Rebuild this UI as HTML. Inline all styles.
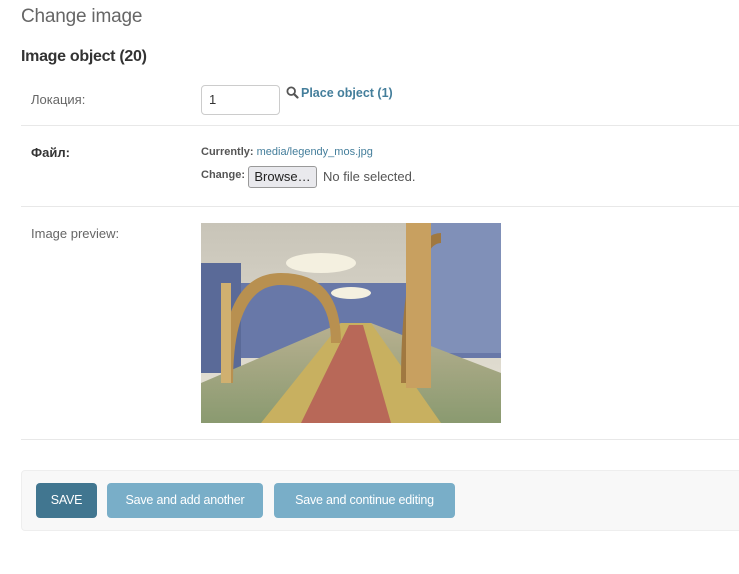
<!DOCTYPE html>
<html><head><style>
body{margin:0;background:#fff;font-family:"Liberation Sans",sans-serif;color:#333;width:739px;height:574px;overflow:hidden;position:relative}
.a{position:absolute;white-space:nowrap}
.sep{position:absolute;left:21px;right:0;height:1px;background:#e8e8e8}
.btn{position:absolute;top:483px;height:35px;border-radius:4px;color:#fff;font-size:12.5px;line-height:35px;text-align:center;letter-spacing:-0.2px}
</style></head><body>
<div class="a" style="left:21px;top:6px;font-size:19px;color:#666;letter-spacing:-0.2px">Change image</div>
<div class="a" style="left:21px;top:48px;font-size:16px;font-weight:bold;color:#333;letter-spacing:-0.3px">Image object (20)</div>
<div class="a" style="left:31px;top:92px;font-size:13px;color:#666">Локация:</div>
<div class="a" style="left:201px;top:85px;width:77px;height:28px;border:1px solid #ccc;border-radius:4px"></div>
<div class="a" style="left:209px;top:92px;font-size:13px;color:#333">1</div>
<svg class="a" style="left:286px;top:86px" width="13" height="13" viewBox="0 0 13 13"><circle cx="5.2" cy="5.2" r="3.8" fill="none" stroke="#555" stroke-width="1.8"/><line x1="8" y1="8" x2="11.5" y2="11.5" stroke="#555" stroke-width="2.2" stroke-linecap="round"/></svg>
<div class="a" style="left:301px;top:86px;font-size:12.5px;font-weight:bold;color:#447e9b">Place object (1)</div>
<div class="sep" style="top:125px"></div>
<div class="a" style="left:31px;top:145px;font-size:13px;font-weight:bold;color:#333">Файл:</div>
<div class="a" style="left:201px;top:146px;font-size:11px;color:#555"><b>Currently:</b> <span style="color:#447e9b">media/legendy_mos.jpg</span></div>
<div class="a" style="left:201px;top:169px;font-size:11px;color:#555;font-weight:bold">Change:</div>
<div class="a" style="left:248px;top:166px;width:67px;height:20px;border:1px solid #999;border-radius:3px;background:#e9e9ed;font-size:13px;line-height:20px;text-align:center;color:#222">Browse…</div>
<div class="a" style="left:323px;top:169px;font-size:13px;color:#555">No file selected.</div>
<div class="sep" style="top:206px"></div>
<div class="a" style="left:31px;top:226px;font-size:13px;color:#666">Image preview:</div>
<svg class="a" style="left:201px;top:223px" width="300" height="200" viewBox="0 0 300 200">
<defs><linearGradient id="f" x1="0" y1="0" x2="0" y2="1"><stop offset="0" stop-color="#b8b090"/><stop offset="1" stop-color="#8a9a70"/></linearGradient>
<linearGradient id="c" x1="0" y1="0" x2="0" y2="1"><stop offset="0" stop-color="#c8c4b8"/><stop offset="1" stop-color="#e8e4d8"/></linearGradient></defs>
<rect width="300" height="200" fill="url(#c)"/>
<rect x="0" y="60" width="300" height="75" fill="#6878a8"/>
<rect x="230" y="0" width="70" height="130" fill="#8090b8"/>
<rect x="0" y="40" width="40" height="110" fill="#5a6a98"/>
<polygon points="0,200 300,200 300,150 170,100 140,100 0,160" fill="url(#f)"/>
<polygon points="60,200 140,100 170,100 240,200" fill="#c8b060"/>
<polygon points="100,200 148,102 162,102 190,200" fill="#b86858"/>
<path d="M20,160 Q20,50 80,50 Q140,50 140,120 L130,120 Q130,62 80,62 Q32,62 32,160Z" fill="#b89050"/>
<path d="M200,160 Q200,10 240,10 L240,20 Q212,20 212,160Z" fill="#a07840"/>
<ellipse cx="120" cy="40" rx="35" ry="10" fill="#f4f0e0"/>
<ellipse cx="150" cy="70" rx="20" ry="6" fill="#f4f0e0"/>
<rect x="205" y="0" width="25" height="165" fill="#c8a060"/>
<rect x="20" y="60" width="10" height="100" fill="#d0b070"/>
</svg>
<div class="sep" style="top:439px"></div>
<div class="a" style="left:21px;top:470px;width:730px;height:59px;background:#f8f8f8;border:1px solid #eee;border-radius:4px"></div>
<div class="btn" style="left:36px;width:61px;background:#417690">SAVE</div>
<div class="btn" style="left:107px;width:156px;background:#79aec8">Save and add another</div>
<div class="btn" style="left:274px;width:181px;background:#79aec8">Save and continue editing</div>
</body></html>
